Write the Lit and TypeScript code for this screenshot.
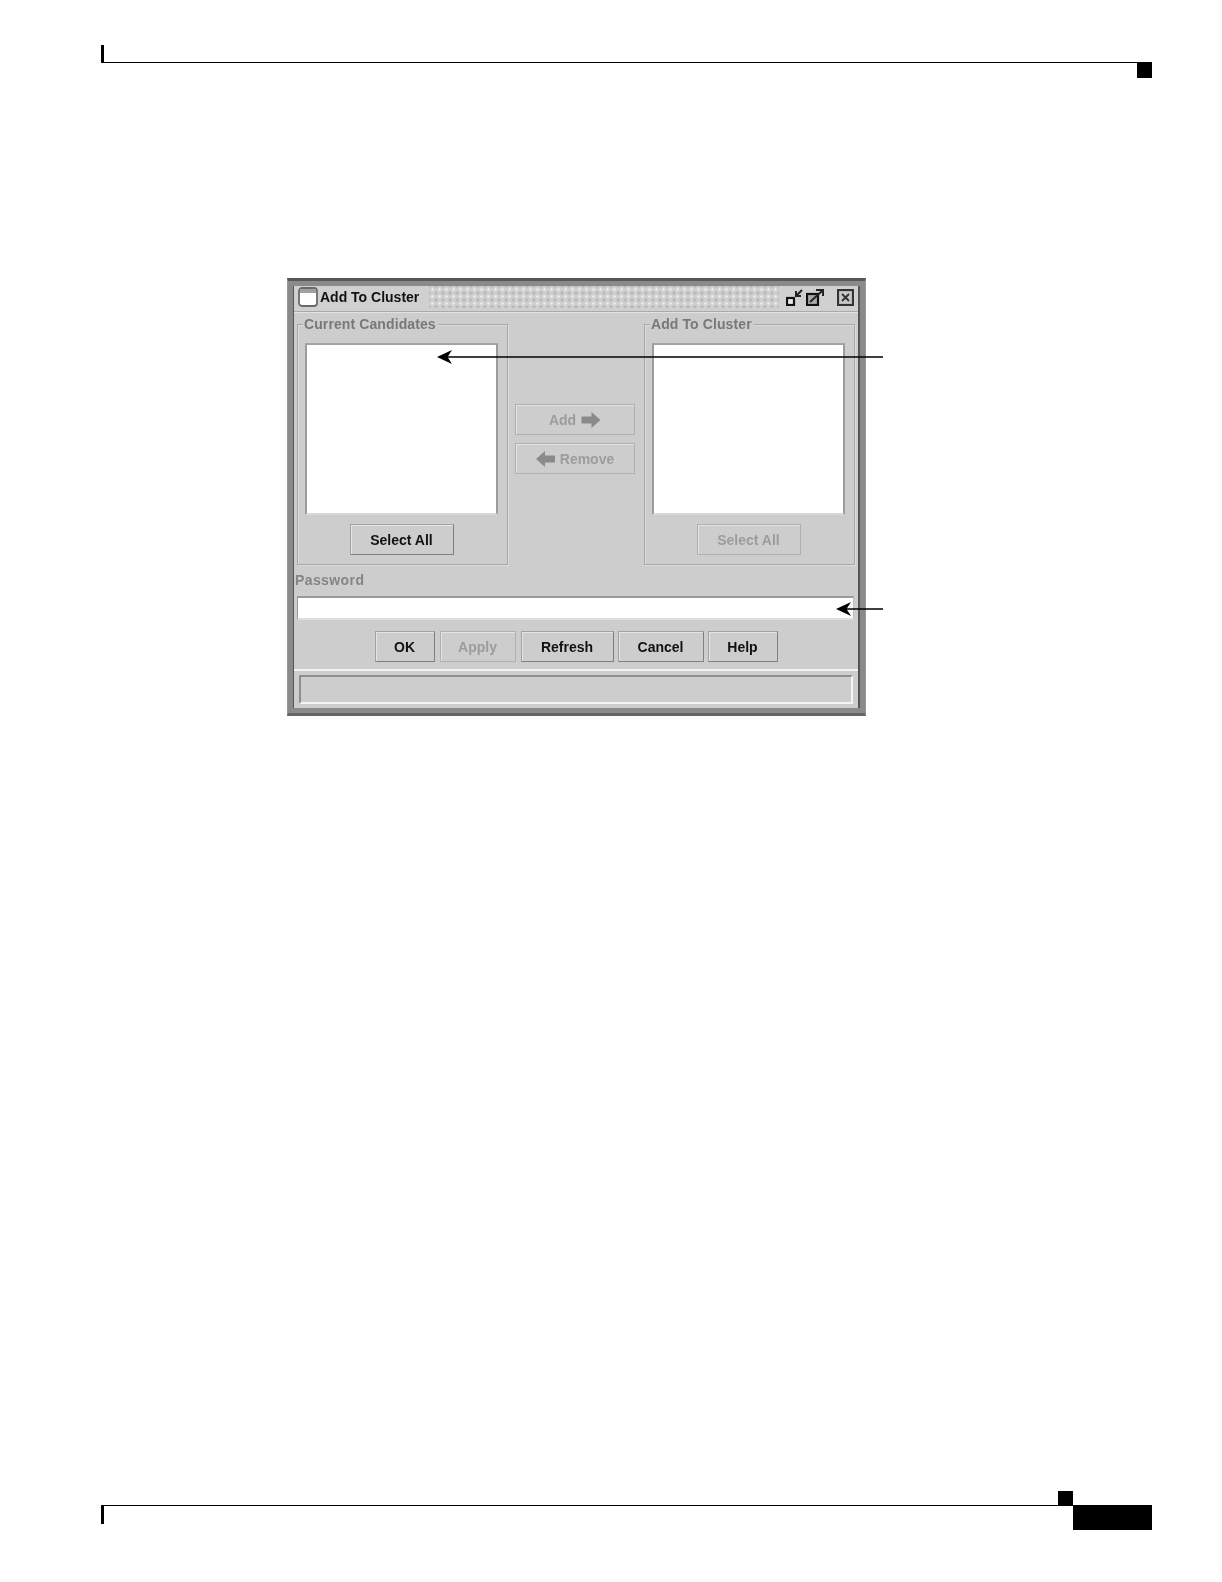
import { LitElement, html, css, svg } from "lit";
import { customElement } from "lit/decorators.js";

const rightArrow = svg`<path d="M0 4.5h10V0l9 8-9 8v-4.5H0z" fill="#8a8a8a"/>`;
const leftArrow = svg`<path d="M19 4.5H9V0L0 8l9 8v-4.5h10z" fill="#8a8a8a"/>`;

@customElement("app-root")
export class AppRoot extends LitElement {
  static styles = css`
    :host { display: block; }
    .page {
      box-sizing: border-box; width: 1222px; height: 1582px; background: #fff;
      padding: 45px 70px 52px 101px; display: flex; flex-direction: column;
      font-family: "Liberation Sans", Arial, sans-serif;
    }
    .head { height: 17px; border-left: 3.5px solid #000; border-bottom: 1.5px solid #000; }
    .head-mark { width: 15px; height: 15px; background: #000; align-self: flex-end; }
    .figure { position: relative; width: 579px; height: 438px; margin: 200px 0 0 186px; }
    .win {
      box-sizing: border-box; width: 579px; height: 438px; filter: blur(0.7px);
      background: #8a8a8a; border: 1px solid #9a9a9a; padding: 5px;
      border-top: 3px solid #585858; border-bottom: 3px solid #666;
    }
    .inner {
      height: 100%; background: #cdcdcd; border-left: 1px solid #555; border-right: 2px solid #555;
      display: flex; flex-direction: column; box-sizing: border-box;
    }
    .title {
      height: 22px; flex: none; display: flex; align-items: center; padding: 0 4px 3px 4px;
      border-bottom: 1px solid #aaa; box-shadow: 0 1px 0 #e2e2e2;
      font-weight: 700; font-size: 14px; color: #111; background: #d0d0d0;
    }
    .title-text { margin-left: 2px; }
    .dither {
      flex: 1; height: 22px; margin: 0 7px 0 10px;
      background-color: #cfcfcf;
      background-image:
        radial-gradient(circle, #e8e8e8 1px, transparent 1.6px),
        radial-gradient(circle, #b2b2b2 1px, transparent 1.6px);
      background-size: 7px 7px, 7px 7px;
      background-position: 0 0, 3.5px 3.5px;
    }
    .tb { flex: none; display: block; }
    .tb + .tb { margin-left: 3px; }
    .tb.close { margin-left: 13px; }
    .body { display: flex; padding: 12px 4px 0 3px; }
    .group {
      box-sizing: border-box; width: 211px; height: 241px; flex: none;
      border: 1px solid #a8a8a8; box-shadow: inset 1px 1px 0 #dcdcdc, 1px 1px 0 #dcdcdc;
      padding: 0 9px 0 7px; display: flex; flex-direction: column;
    }
    .legend {
      margin: -9px 0 0 -2px; width: fit-content; background: #cdcdcd; padding: 0 2px 0 1px;
      font-size: 14px; line-height: 16px; font-weight: 700; color: #787878; letter-spacing: 0.1px;
    }
    .list {
      height: 172px; margin-top: 11px; background: #fff; flex: none;
      border: 2px solid #9c9c9c; border-bottom-color: #d8d8d8; border-top-color: #a4a4a4; box-sizing: border-box;
    }
    .btn {
      box-sizing: border-box; display: flex; align-items: center; justify-content: center; gap: 5px;
      border: 1px solid #a2a2a2; border-right-color: #808080; border-bottom-color: #808080;
      box-shadow: inset 1px 1px 0 #e4e4e4; background: #cdcdcd;
      font-size: 14px; font-weight: 700; color: #111; height: 31px; flex: none;
    }
    .btn.off { color: #9c9c9c; border-color: #b0b0b0; }
    .select { width: 104px; align-self: center; margin-top: 9px; }
    .mid { width: 120px; flex: none; margin: 80px 9px 0 7px; display: flex; flex-direction: column; gap: 8px; }
    .mid .btn { width: 120px; }
    .pw-label {
      margin: 7px 0 0 1px; font-size: 14px; line-height: 16px; font-weight: 700; color: #858585; letter-spacing: 0.4px;
    }
    .pw {
      box-sizing: border-box; height: 24px; margin: 8px 4px 0 3px; background: #fff;
      border: 1px solid #9a9a9a; border-top: 2px solid #9a9a9a; border-bottom: 2px solid #dedede; border-right-color: #bbb;
    }
    .actions { display: flex; justify-content: center; gap: 4px; margin-top: 11px; }
    .w-ok { width: 60px; } .w-apply { width: 76px; margin-left: 1px; } .w-refresh { width: 93px; margin-left: 1px; }
    .w-cancel { width: 86px; } .w-help { width: 70px; }
    .statusbar {
      flex: 1; margin-top: 7px; border-top: 2px solid #f2f2f2; padding: 4px 5px 4px 5px;
      display: flex; flex-direction: column;
    }
    .status {
      flex: 1; box-sizing: border-box; border: 2px solid #8e8e8e;
      border-right-color: #f4f4f4; border-bottom-color: #f4f4f4;
    }
    .callout { position: absolute; display: block; }
    .c1 { left: 150px; top: 72px; }
    .c2 { left: 549px; top: 324px; }
    .foot { margin-top: auto; display: grid; grid-template-columns: 1fr 79px; grid-template-rows: 14px 25px; }
    .foot-mark { width: 15px; height: 14px; background: #000; justify-self: end; grid-column: 1; grid-row: 1; }
    .foot-line { grid-column: 1; grid-row: 2; height: 18px; border-top: 1.5px solid #000; border-left: 3.5px solid #000; }
    .foot-box { grid-column: 2; grid-row: 2; background: #000; }
  `;

  private group(label: string, off: boolean) {
    return html`<div class="group">
      <div class="legend">${label}</div>
      <div class="list"></div>
      <div class="btn select ${off ? "off" : ""}">Select All</div>
    </div>`;
  }

  render() {
    return html`<div class="page">
      <div class="head"></div>
      <div class="head-mark"></div>
      <div class="figure">
        <div class="win">
          <div class="inner">
            <div class="title">
              <svg class="tb" width="20" height="20" viewBox="0 0 20 20">
                <rect x="1" y="1" width="18" height="18" rx="3" fill="#fff" stroke="#6a6a6a" stroke-width="1.8"/>
                <rect x="2" y="2" width="16" height="4" fill="#a0a0a0"/>
              </svg>
              <span class="title-text">Add To Cluster</span>
              <div class="dither"></div>
              <svg class="tb" width="17" height="17" viewBox="0 0 17 17">
                <rect x="1" y="9" width="7" height="7" fill="#e8e8e8" stroke="#111" stroke-width="2.2"/>
                <path d="M16 1l-6 6M10 2v5h5" fill="none" stroke="#222" stroke-width="2"/>
              </svg>
              <svg class="tb" width="18" height="17" viewBox="0 0 18 17">
                <rect x="1" y="5" width="11" height="11" fill="#aaa" stroke="#111" stroke-width="2.2"/>
                <path d="M4 13L16 2M10 1h7v6" fill="none" stroke="#222" stroke-width="2"/>
              </svg>
              <svg class="tb close" width="17" height="17" viewBox="0 0 17 17">
                <rect x="1" y="1" width="15" height="15" fill="#c8c8c8" stroke="#333" stroke-width="2.2"/>
                <path d="M5 5l7 7M12 5l-7 7" stroke="#333" stroke-width="1.8"/>
              </svg>
            </div>
            <div class="body">
              ${this.group("Current Candidates", false)}
              <div class="mid">
                <div class="btn off">Add <svg width="20" height="16" viewBox="0 0 19 16">${rightArrow}</svg></div>
                <div class="btn off"><svg width="19" height="16" viewBox="0 0 19 16">${leftArrow}</svg> Remove</div>
              </div>
              ${this.group("Add To Cluster", true)}
            </div>
            <div class="pw-label">Password</div>
            <div class="pw"></div>
            <div class="actions">
              <div class="btn w-ok">OK</div>
              <div class="btn w-apply off">Apply</div>
              <div class="btn w-refresh">Refresh</div>
              <div class="btn w-cancel">Cancel</div>
              <div class="btn w-help">Help</div>
            </div>
            <div class="statusbar"><div class="status"></div></div>
          </div>
        </div>
        <svg class="callout c1" width="446" height="14" viewBox="0 0 446 14">
          <path d="M0 7L15 0L11 6.3H446V7.8H11L15 14Z" fill="#000"/>
        </svg>
        <svg class="callout c2" width="47" height="14" viewBox="0 0 47 14">
          <path d="M0 7L15 0L11 6.3H47V7.8H11L15 14Z" fill="#000"/>
        </svg>
      </div>
      <div class="foot">
        <div class="foot-mark"></div>
        <div class="foot-line"></div>
        <div class="foot-box"></div>
      </div>
    </div>`;
  }
}
